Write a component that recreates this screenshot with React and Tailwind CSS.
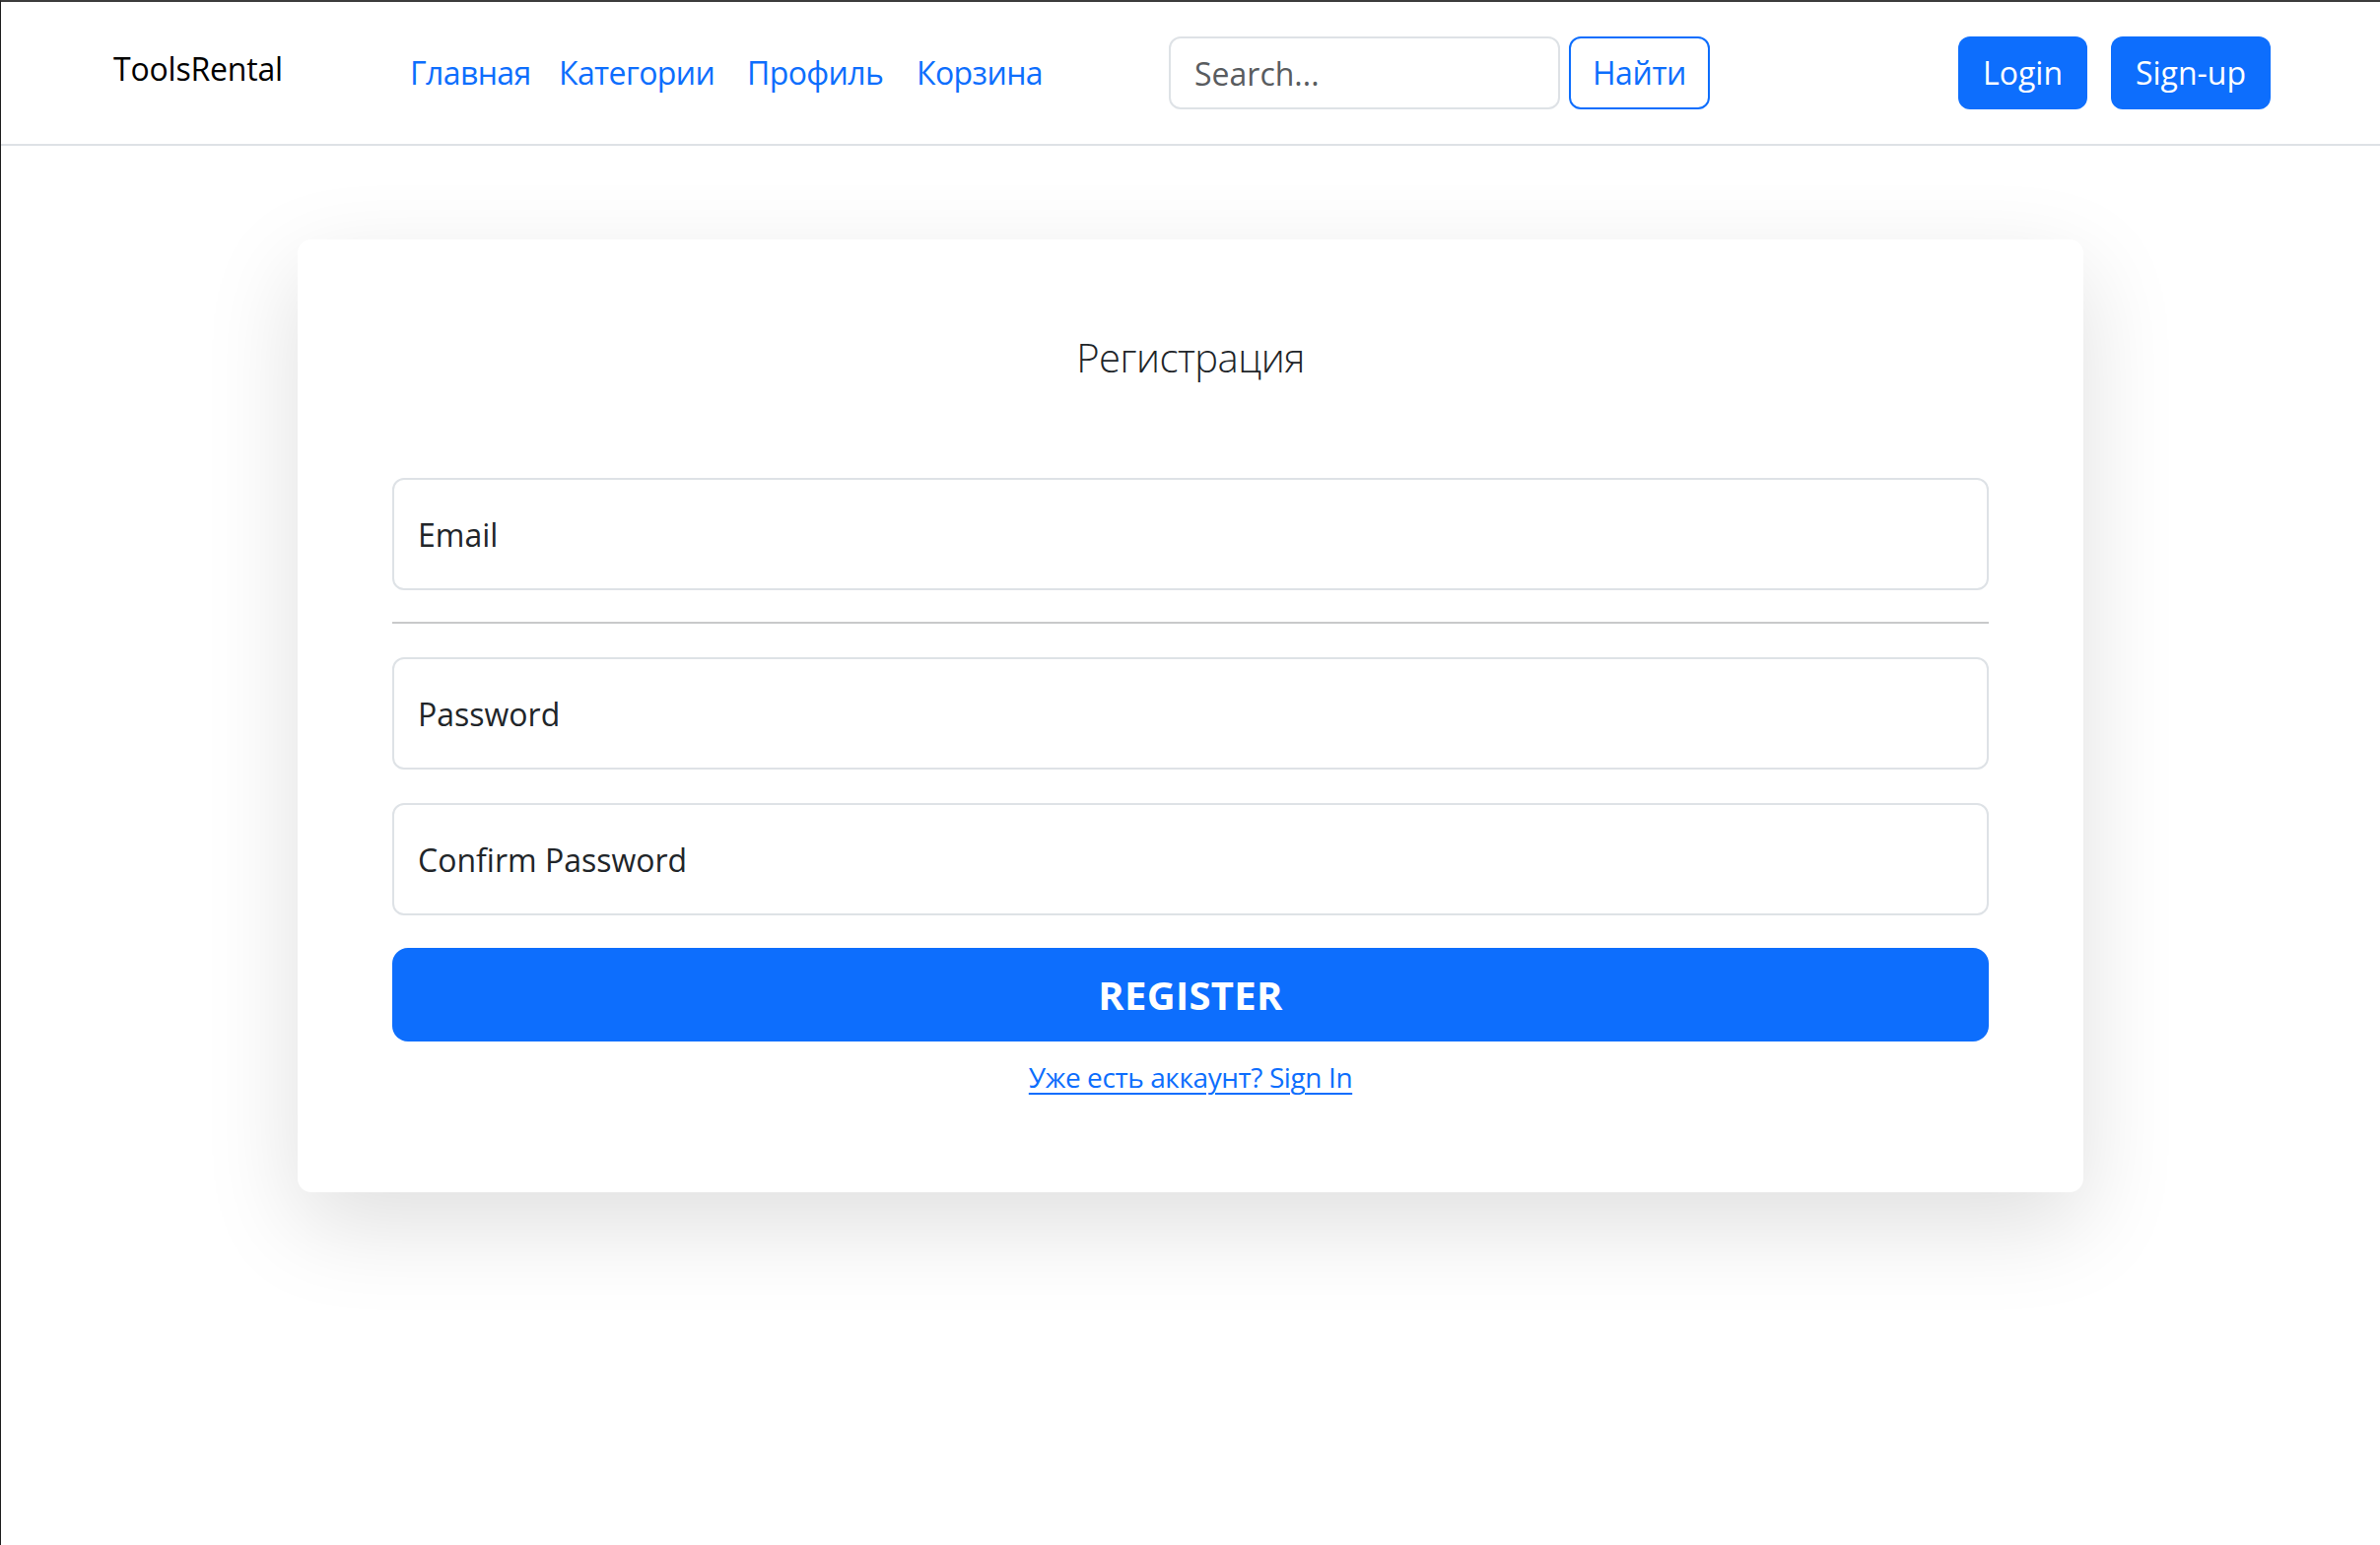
import React from "react";

export default function App() {
  return (
    <div className="min-h-screen w-full bg-white border-t-2 border-t-[#3d3d3d] border-l border-l-[#1e1e1e] font-['Open_Sans',sans-serif] text-[#212529]">
      <header className="h-[146px] border-b-2 border-b-[#dee2e6] flex items-center">
        <div className="w-[415px] pl-[114px] pb-[8px]">
          <a className="text-[32px] leading-[48px] text-black whitespace-nowrap tracking-[-0.2px]">ToolsRental</a>
        </div>
        <nav className="w-[770px] flex items-center text-[32px] leading-[48px] text-[#0d6efd] whitespace-nowrap tracking-[-0.6px]">
          <a className="w-[151px]">Главная</a>
          <a className="w-[191px]">Категории</a>
          <a className="w-[172px]">Профиль</a>
          <a className="w-[126px]">Корзина</a>
        </nav>
        <form className="flex items-center gap-[9px]" onSubmit={(e) => e.preventDefault()}>
          <input
            className="w-[397px] h-[74px] border-2 border-[#dee2e6] rounded-[12px] px-[24px] text-[32px] outline-none placeholder:text-[#595c5f]"
            placeholder="Search..."
          />
          <button className="w-[143px] h-[74px] border-2 border-[#0d6efd] rounded-[12px] text-[32px] text-[#0d6efd] tracking-[-0.4px]">
            Найти
          </button>
        </form>
        <div className="ml-auto pr-[111px] flex items-center gap-[24px]">
          <button className="w-[131px] h-[74px] rounded-[12px] bg-[#0d6efd] text-white text-[32px]">Login</button>
          <button className="w-[162px] h-[74px] rounded-[12px] bg-[#0d6efd] text-white text-[32px]">Sign-up</button>
        </div>
      </header>

      <main className="pt-[95px] pb-[100px]">
        <div className="mx-auto w-[1812px] rounded-[14px] bg-white p-[96px] shadow-[0_32px_96px_rgba(0,0,0,0.13)]">
          <h3 className="text-center text-[40px] leading-[48px] font-light text-[#212529] mb-[98px] tracking-[-0.5px]">
            Регистрация
          </h3>
          <input
            className="block w-full h-[114px] border-2 border-[#dee2e6] rounded-[12px] px-[24px] text-[32px] outline-none placeholder:text-[#212529]"
            placeholder="Email"
          />
          <div className="mt-[32px] mb-[34px] h-[2px] bg-[#c8c9ca]" />
          <input
            type="password"
            className="block w-full h-[114px] border-2 border-[#dee2e6] rounded-[12px] px-[24px] text-[32px] outline-none placeholder:text-[#212529] mb-[34px]"
            placeholder="Password"
          />
          <input
            type="password"
            className="block w-full h-[114px] border-2 border-[#dee2e6] rounded-[12px] px-[24px] text-[32px] outline-none placeholder:text-[#212529] mb-[33px]"
            placeholder="Confirm Password"
          />
          <button className="block w-full h-[95px] rounded-[16px] bg-[#0d6efd] text-white text-[40px] font-bold uppercase tracking-[0.3px]">
            Register
          </button>
          <div className="mt-[15px] text-center">
            <a className="text-[28px] leading-[42px] text-[#0d6efd] underline underline-offset-[5px] decoration-2 tracking-[-0.4px]">
              Уже есть аккаунт? Sign In
            </a>
          </div>
        </div>
      </main>
    </div>
  );
}
